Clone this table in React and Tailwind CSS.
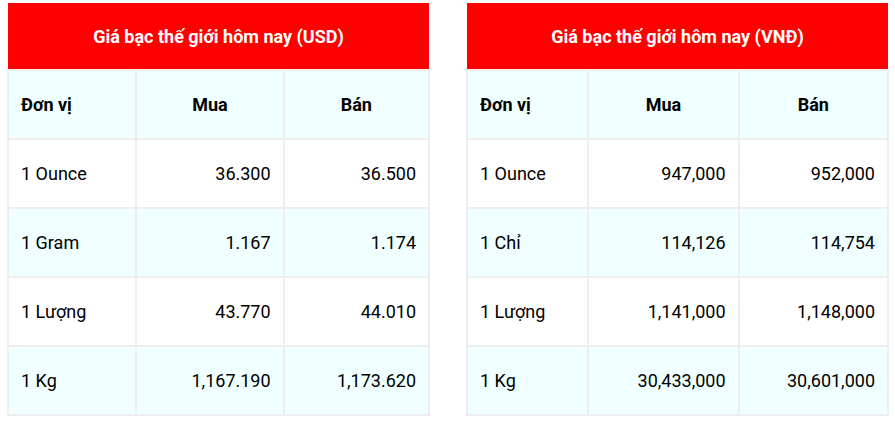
import React from "react";

const USD = [
  ["1 Ounce", "36.300", "36.500"],
  ["1 Gram", "1.167", "1.174"],
  ["1 Lượng", "43.770", "44.010"],
  ["1 Kg", "1,167.190", "1,173.620"]
];

const VND = [
  ["1 Ounce", "947,000", "952,000"],
  ["1 Chỉ", "114,126", "114,754"],
  ["1 Lượng", "1,141,000", "1,148,000"],
  ["1 Kg", "30,433,000", "30,601,000"]
];

function PriceTable({ title, rows, widths }) {
  return (
    <table className="border-collapse text-[18px] text-black" style={{ width: widths.reduce((a, b) => a + b, 0) }}>
      <colgroup>
        {widths.map((w, i) => (
          <col key={i} style={{ width: w }} />
        ))}
      </colgroup>
      <thead>
        <tr>
          <th colSpan={3} className="h-[67px] bg-[#ff0000] text-white font-bold text-center border-2 border-[#eeeeee] border-t-0 border-x-0">
            {title}
          </th>
        </tr>
        <tr className="bg-[#f0ffff]">
          <th className="h-[69px] border-2 border-[#eeeeee] px-[12px] text-left font-bold">Đơn vị</th>
          <th className="h-[69px] border-2 border-[#eeeeee] text-center font-bold">Mua</th>
          <th className="h-[69px] border-2 border-[#eeeeee] text-center font-bold">Bán</th>
        </tr>
      </thead>
      <tbody>
        {rows.map((r, i) => (
          <tr key={r[0]} className={i % 2 === 1 ? "bg-[#f0ffff]" : "bg-white"}>
            <td className="h-[69px] border-2 border-[#eeeeee] px-[12px] text-left">{r[0]}</td>
            <td className="h-[69px] border-2 border-[#eeeeee] px-[12px] text-right">{r[1]}</td>
            <td className="h-[69px] border-2 border-[#eeeeee] px-[12px] text-right">{r[2]}</td>
          </tr>
        ))}
      </tbody>
    </table>
  );
}

export default function App() {
  return (
    <div className="w-[895px] h-[436px] bg-white pt-[3px] pl-[7px]" style={{ fontFamily: "Roboto, 'Noto Sans', sans-serif" }}>
      <div className="flex items-start gap-[36px]">
        <PriceTable title="Giá bạc thế giới hôm nay (USD)" rows={USD} widths={[129, 148, 146]} />
        <PriceTable title="Giá bạc thế giới hôm nay (VNĐ)" rows={VND} widths={[122, 151, 150]} />
      </div>
    </div>
  );
}
